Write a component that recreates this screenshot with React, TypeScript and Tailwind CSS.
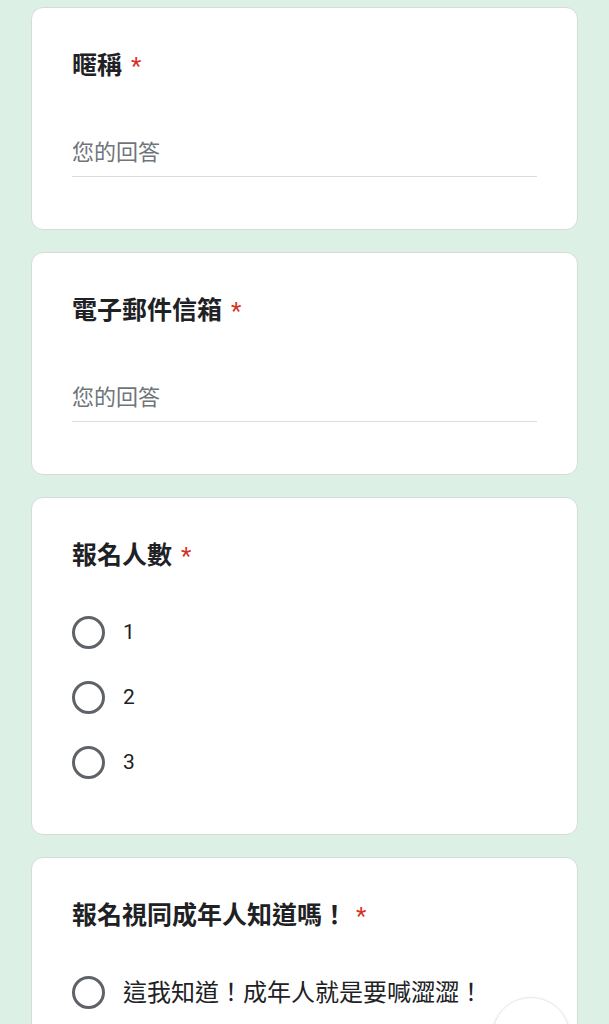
import React from "react";
import { ArrowDown } from "lucide-react";

const CJK = "font-['Roboto','Noto_Sans_CJK_TC',sans-serif]";

function Title({ text }: { text: string }) {
  return (
    <div className="flex items-center h-[36px] text-[25px] leading-[36px] font-bold text-[#202124]">
      <span>{text}</span>
      <span className="ml-[9px] text-[#d93025] font-normal text-[24px]">*</span>
    </div>
  );
}

function TextCard({ title }: { title: string }) {
  return (
    <div className="bg-white border border-[#d6dbd8] rounded-[12px] pt-[40px] pb-[52px] px-[40px]">
      <Title text={title} />
      <div className="mt-[54px] pb-[8px] border-b border-[#dadce0] text-[22px] leading-[30px] text-[#70757a]">
        您的回答
      </div>
    </div>
  );
}

function Radio({ label, size = "text-[21px]" }: { label: string; size?: string }) {
  return (
    <div className="flex items-center h-[65px]">
      <div className="w-[33px] h-[33px] rounded-full border-[3px] border-[#5f6368] shrink-0" />
      <span className={`ml-[18px] ${size} text-[#202124]`}>{label}</span>
    </div>
  );
}

export default function App() {
  return (
    <div className={`min-h-[1024px] bg-[#ddf0e5] px-[31px] pt-[7px] pb-[40px] flex flex-col gap-[22px] relative overflow-hidden ${CJK}`}>
      <TextCard title="暱稱" />
      <TextCard title="電子郵件信箱" />
      <div className="bg-white border border-[#d6dbd8] rounded-[12px] pt-[40px] pb-[39px] px-[40px]">
        <Title text="報名人數" />
        <div className="mt-[26px] flex flex-col">
          <Radio label="1" />
          <Radio label="2" />
          <Radio label="3" />
        </div>
      </div>
      <div className="bg-white border border-[#d6dbd8] rounded-[12px] pt-[40px] pb-[39px] px-[40px]">
        <Title text="報名視同成年人知道嗎！" />
        <div className="mt-[26px] flex flex-col">
          <Radio label="這我知道！成年人就是要喊澀澀！" size="text-[24px]" />
        </div>
      </div>
      <div className="absolute left-[492px] top-[997px] w-[78px] h-[78px] rounded-full bg-white border border-[#e8eaed] shadow-[0_1px_3px_rgba(0,0,0,0.12)] flex items-center justify-center">
        <ArrowDown className="w-[24px] h-[24px] text-[#5f6368]" />
      </div>
    </div>
  );
}
